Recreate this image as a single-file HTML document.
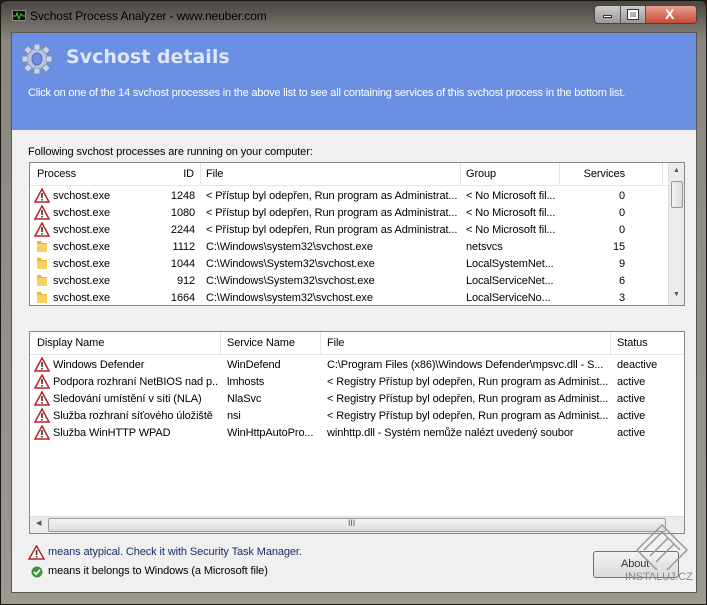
<!DOCTYPE html>
<html><head><style>
*{margin:0;padding:0;box-sizing:border-box}
body{width:707px;height:605px;overflow:hidden;background:#2a1d14;font-family:"Liberation Sans",sans-serif;font-size:11px;letter-spacing:-0.1px;color:#000;position:relative}
.a{position:absolute;white-space:nowrap}
.c{overflow:hidden}
.frame{left:0;top:0;width:707px;height:605px;background:linear-gradient(#4a4540,#8a8680 40px,#9c9892);border-radius:6px 6px 0 0;border:1px solid #1a1410}
.client{left:11px;top:32px;width:686px;height:561px;background:#f0f0f0;border:1px solid #5a5650}
.blue{left:12px;top:33px;width:684px;height:97px;background:#6a8fe3}
.list{background:#fff;border:1px solid #828790}
.hdr{background:#fff;border-bottom:1px solid #e5e5e5;height:23px}
.sep{position:absolute;top:0;width:1px;height:23px;background:#e5e5e5}
.r{text-align:right}
</style></head><body>
<div class="a frame"></div>
<div class="a" style="left:12px;top:10px;width:14px;height:11px;background:#111;border:1px solid #888"></div>
<svg class="a" style="left:13px;top:11px" width="12" height="9"><polyline points="0,5 3,5 4,2 6,8 8,3 10,5 12,5" fill="none" stroke="#3c3" stroke-width="1"/></svg>
<div class="a" style="left:30px;top:9px;font-size:12px;color:#000">Svchost Process Analyzer - www.neuber.com</div>
<div class="a" style="left:594px;top:5px;width:103px;height:19px;border:1px solid #444;border-radius:4px;background:linear-gradient(#ccc,#999);overflow:hidden">
<div class="a" style="left:25px;top:0;width:1px;height:19px;background:#555"></div>
<div class="a" style="left:50px;top:0;width:1px;height:19px;background:#555"></div>
<div class="a" style="left:51px;top:0;width:52px;height:19px;background:linear-gradient(#e8a090,#c0402a)"></div>
<div class="a" style="left:8px;top:9px;width:9px;height:3px;background:#fff;border:1px solid #333"></div>
<div class="a" style="left:33px;top:4px;width:10px;height:9px;border:2px solid #fff;outline:1px solid #333"></div>
<div class="a" style="left:70px;top:0px;color:#fff;font-weight:bold;font-size:14px">X</div>
</div>
<div class="a client"></div>
<div class="a blue"></div>
<svg class="a" style="left:22px;top:43px" width="30" height="32" viewBox="0 0 30 32"><g fill="#c8d4ec" stroke="#8090b0" stroke-width="1"><circle cx="15" cy="16" r="11"/><g fill="#c8d4ec"><rect x="12" y="1" width="6" height="6"/><rect x="12" y="25" width="6" height="6"/><rect x="0" y="13" width="6" height="6"/><rect x="24" y="13" width="6" height="6"/><rect x="3" y="4" width="6" height="6" transform="rotate(45 6 7)"/><rect x="21" y="4" width="6" height="6" transform="rotate(45 24 7)"/><rect x="3" y="22" width="6" height="6" transform="rotate(45 6 25)"/><rect x="21" y="22" width="6" height="6" transform="rotate(45 24 25)"/></g></g><circle cx="15" cy="16" r="9" fill="#b8c6e4"/><ellipse cx="15" cy="16" rx="5" ry="6" fill="#6a8fe3" stroke="#5070b0"/></svg>
<div class="a" style="left:66px;top:46px;font-size:19px;font-weight:bold;color:#dfe6fa;font-family:'DejaVu Sans',sans-serif;letter-spacing:0">Svchost details</div>
<div class="a" style="left:28px;top:87px;font-size:11px;color:#fff;letter-spacing:-0.2px">Click on one of the 14 svchost processes in the above list to see all containing services of this svchost process in the bottom list.</div>
<div class="a" style="left:28px;top:146px">Following svchost processes are running on your computer:</div>

<div class="a list" style="left:29px;top:162px;width:656px;height:144px;overflow:hidden">
<div class="a hdr" style="left:0;top:0;width:638px">
<div class="sep" style="left:170px"></div><div class="sep" style="left:430px"></div><div class="sep" style="left:529px"></div><div class="sep" style="left:632px"></div>
<div class="a" style="left:7px;top:5px">Process</div>
<div class="a r" style="left:120px;top:5px;width:44px">ID</div>
<div class="a" style="left:176px;top:5px">File</div>
<div class="a" style="left:436px;top:5px">Group</div>
<div class="a r" style="left:540px;top:5px;width:55px">Services</div>
</div>
<div class="a" style="left:638px;top:0;width:17px;height:142px;background:#ececec;border-left:1px solid #ddd">
<div class="a" style="left:2px;top:18px;width:12px;height:27px;background:linear-gradient(90deg,#f2f2f2,#dcdcdc);border:1px solid #999;border-radius:2px"></div>
<div class="a" style="left:4px;top:4px;font-size:7px;color:#555">▲</div>
<div class="a" style="left:4px;top:128px;font-size:7px;color:#555">▼</div>
</div>
<div id="top"></div>
</div>

<div class="a list" style="left:29px;top:331px;width:656px;height:203px;overflow:hidden">
<div class="a hdr" style="left:0;top:0;width:654px">
<div class="sep" style="left:190px"></div><div class="sep" style="left:290px"></div><div class="sep" style="left:580px"></div>
<div class="a" style="left:7px;top:5px">Display Name</div>
<div class="a" style="left:197px;top:5px">Service Name</div>
<div class="a" style="left:297px;top:5px">File</div>
<div class="a" style="left:587px;top:5px">Status</div>
</div>
<div class="a" style="left:0;top:184px;width:654px;height:17px;background:#ececec;border-top:1px solid #ddd">
<div class="a" style="left:18px;top:1px;width:618px;height:14px;background:linear-gradient(#f4f4f4,#dcdcdc);border:1px solid #999;border-radius:2px"></div>
<div class="a" style="left:6px;top:2px;font-size:7px;color:#555">◀</div>
<div class="a" style="left:318px;top:1px;font-size:9px;color:#555">III</div>
</div>
<div id="bot"></div>
</div>

<svg class="a" style="left:28px;top:545px" width="17" height="15" viewBox="0 0 17 15"><path d="M8.5 1 L16 14 H1 Z" fill="#fff" stroke="#c02020" stroke-width="1.5"/><rect x="7.8" y="5" width="1.6" height="5" fill="#333"/><rect x="7.8" y="11" width="1.6" height="1.5" fill="#333"/></svg>
<div class="a" style="left:48px;top:546px;color:#1a2a6a">means atypical. Check it with Security Task Manager.</div>
<svg class="a" style="left:31px;top:566px" width="12" height="12"><circle cx="6" cy="6" r="5.5" fill="#3a9a3a"/><path d="M3 6 L5.2 8.2 L9 3.8" stroke="#fff" stroke-width="1.6" fill="none"/></svg>
<div class="a" style="left:48px;top:565px;color:#000">means it belongs to Windows (a Microsoft file)</div>
<div class="a" style="left:593px;top:551px;width:86px;height:27px;border:1px solid #707070;border-radius:3px;background:linear-gradient(#f2f2f2,#dadada)"></div>
<div class="a" style="left:621px;top:558px;color:#333">About</div>
<svg class="a" style="left:632px;top:520px" width="58" height="50"><g fill="none" stroke="#999" stroke-width="1.5"><path d="M5 30 L30 5 L55 30 L30 55 Z"/><path d="M12 30 L30 12 L48 30"/><path d="M18 36 L36 18 M24 42 L42 24"/></g></svg>
<div class="a" style="left:625px;top:571px;color:#888;font-size:11px">INSTALUJ.CZ</div>

<script>
function e(s){return s.replace(/</g,"&lt;")}
var t=[["w","svchost.exe","1248","< Přístup byl odepřen, Run program as Administrat...","< No Microsoft fil...","0"],
["w","svchost.exe","1080","< Přístup byl odepřen, Run program as Administrat...","< No Microsoft fil...","0"],
["w","svchost.exe","2244","< Přístup byl odepřen, Run program as Administrat...","< No Microsoft fil...","0"],
["f","svchost.exe","1112","C:\\Windows\\system32\\svchost.exe","netsvcs","15"],
["f","svchost.exe","1044","C:\\Windows\\System32\\svchost.exe","LocalSystemNet...","9"],
["f","svchost.exe","912","C:\\Windows\\System32\\svchost.exe","LocalServiceNet...","6"],
["f","svchost.exe","1664","C:\\Windows\\system32\\svchost.exe","LocalServiceNo...","3"]];
var W='<svg class="a" style="left:4px;top:ZZpx" width="16" height="15" viewBox="0 0 16 15"><path d="M8 1 L15 14 H1 Z" fill="#fff" stroke="#c02020" stroke-width="1.5"/><rect x="7.2" y="5" width="1.6" height="5" fill="#333"/><rect x="7.2" y="11" width="1.6" height="1.5" fill="#333"/></svg>';
var F='<svg class="a" style="left:6px;top:ZZpx" width="12" height="14"><path d="M1 2 H5 L6 4 H11 V13 H1 Z" fill="#e8b830"/><path d="M1 5 H11 V13 H1Z" fill="#f6d060"/></svg>';
var h='';
t.forEach(function(r,i){var y=24+i*17;
h+=(r[0]=="w"?W:F).replace("ZZ",y+1);
h+='<div class="a" style="left:23px;top:'+(y+3)+'px">'+r[1]+'</div>';
h+='<div class="a r" style="left:120px;top:'+(y+3)+'px;width:45px">'+r[2]+'</div>';
h+='<div class="a c" style="left:176px;top:'+(y+3)+'px;width:252px">'+e(r[3])+'</div>';
h+='<div class="a c" style="left:436px;top:'+(y+3)+'px;width:92px">'+e(r[4])+'</div>';
h+='<div class="a r" style="left:540px;top:'+(y+3)+'px;width:55px">'+r[5]+'</div>';});
document.getElementById('top').outerHTML=h;
var b=[["Windows Defender","WinDefend","C:\\Program Files (x86)\\Windows Defender\\mpsvc.dll - S...","deactive"],
["Podpora rozhraní NetBIOS nad p...","lmhosts","< Registry Přístup byl odepřen, Run program as Administ...","active"],
["Sledování umístění v síti (NLA)","NlaSvc","< Registry Přístup byl odepřen, Run program as Administ...","active"],
["Služba rozhraní síťového úložiště","nsi","< Registry Přístup byl odepřen, Run program as Administ...","active"],
["Služba WinHTTP WPAD","WinHttpAutoPro...","winhttp.dll - Systém nemůže nalézt uvedený soubor","active"]];
h='';
b.forEach(function(r,i){var y=24+i*17;
h+=W.replace("ZZ",y+1);
h+='<div class="a c" style="left:23px;top:'+(y+3)+'px;width:166px">'+r[0]+'</div>';
h+='<div class="a c" style="left:197px;top:'+(y+3)+'px;width:92px">'+r[1]+'</div>';
h+='<div class="a c" style="left:297px;top:'+(y+3)+'px;width:282px">'+e(r[2])+'</div>';
h+='<div class="a" style="left:587px;top:'+(y+3)+'px">'+r[3]+'</div>';});
document.getElementById('bot').outerHTML=h;
</script>
</body></html>
